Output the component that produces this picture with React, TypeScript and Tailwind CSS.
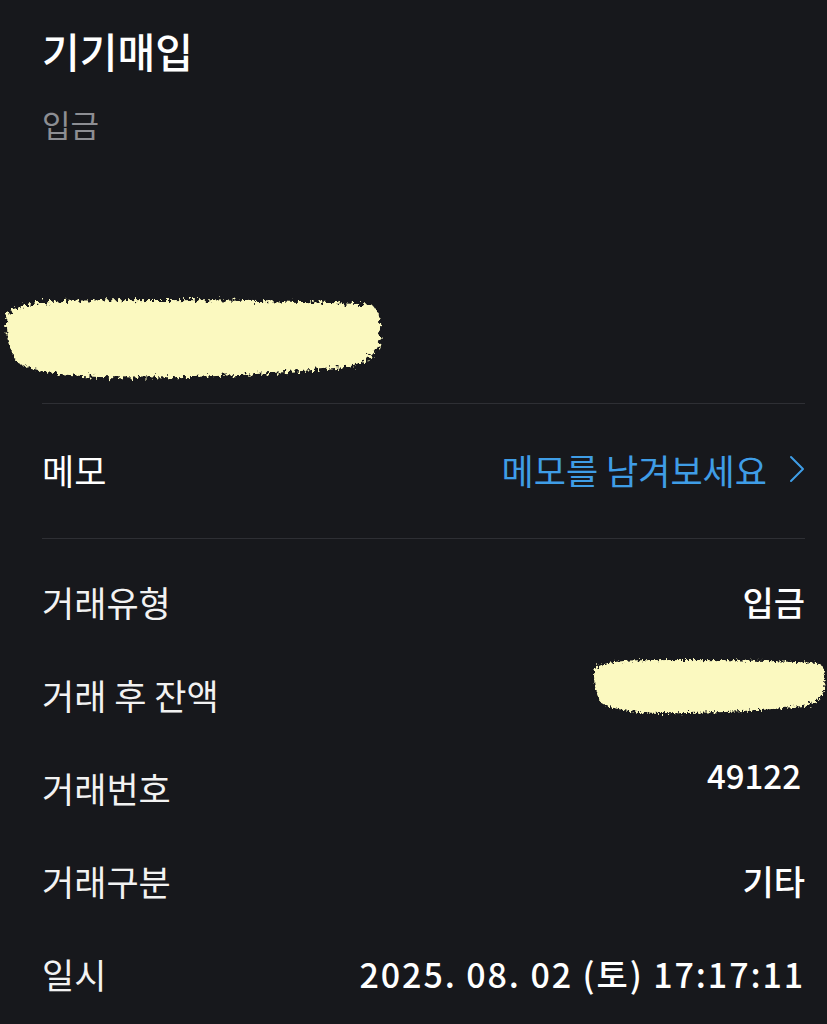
import React from 'react';

const rows: { label: string; value?: string; blur?: boolean; kind?: 'num' | 'date' }[] = [
  { label: '거래유형', value: '입금' },
  { label: '거래 후 잔액', blur: true },
  { label: '거래번호', value: '49122', kind: 'num' },
  { label: '거래구분', value: '기타' },
  { label: '일시', value: '2025. 08. 02 (토) 17:17:11', kind: 'date' },
];

function Scribble({ className, seed }: { className: string; seed: number }) {
  const id = 'rough' + seed;
  return (
    <svg className={className} viewBox="0 0 100 20" preserveAspectRatio="none">
      <defs>
        <filter id={id} x="-10%" y="-30%" width="120%" height="160%">
          <feTurbulence type="fractalNoise" baseFrequency="1.2" numOctaves="2" seed={seed} />
          <feDisplacementMap in="SourceGraphic" scale="2.4" />
        </filter>
      </defs>
      <path
        d="M1.5 5 Q4 2.5 20 2.2 Q60 1.8 96 3 Q99 5 98 9 Q99 14 90 16 Q60 18.5 30 18.2 Q10 18 4 15 Q0.5 10 1.5 5 Z"
        fill="#fbf9c0"
        filter={`url(#${id})`}
      />
    </svg>
  );
}

export default function App() {
  return (
    <div
      className="min-h-[1024px] w-full bg-[#17181c] text-white"
      style={{ fontFamily: '"Noto Sans CJK KR", "Noto Sans", sans-serif' }}
    >
      <div className="pl-[42px] pr-[22px] pt-[22px]">
        <h1 className="text-[41px] font-medium leading-[56px]">기기매입</h1>
        <p className="mt-[26px] text-[31px] leading-[40px] text-[#8d8e93]">입금</p>
      </div>

      <div className="mt-[146px] h-[96px] pl-[1px]">
        <Scribble seed={4} className="h-[96px] w-[386px]" />
      </div>

      <div className="ml-[42px] mr-[22px] mt-[17px] border-t border-[#2e2f34]" />

      <div className="ml-[42px] mr-[22px] flex h-[134px] items-center justify-between pb-[4px]">
        <span className="text-[35px] leading-none">메모</span>
        <span className="flex items-center gap-[22px] text-[35px] leading-none text-[#3f9de6]">
          메모를 남겨보세요
          <svg width="16" height="28" viewBox="0 0 16 28" fill="none">
            <path d="M2 2 L14 14 L2 26" stroke="#3f9de6" strokeWidth="2" strokeLinecap="round" strokeLinejoin="round" />
          </svg>
        </span>
      </div>

      <div className="ml-[42px] mr-[22px] border-t border-[#2e2f34]" />

      <div className="ml-[42px] mr-[22px] pt-[16px]">
        {rows.map((r) => (
          <div key={r.label} className="flex h-[93px] items-center justify-between">
            <span className="text-[35px] leading-none text-[#f2f2f2]">{r.label}</span>
            {r.blur ? (
              <Scribble seed={9} className="mr-[-24px] mt-[-18px] h-[66px] w-[238px]" />
            ) : r.kind === 'num' ? (
              <span className="mr-[4px] mt-[-24px] text-[33px] font-medium leading-none text-white">{r.value}</span>
            ) : r.kind === 'date' ? (
              <span className="text-[34px] font-medium leading-none tracking-[1.9px] text-white">{r.value}</span>
            ) : (
              <span className="text-[34px] font-medium leading-none text-white">{r.value}</span>
            )}
          </div>
        ))}
      </div>
    </div>
  );
}
